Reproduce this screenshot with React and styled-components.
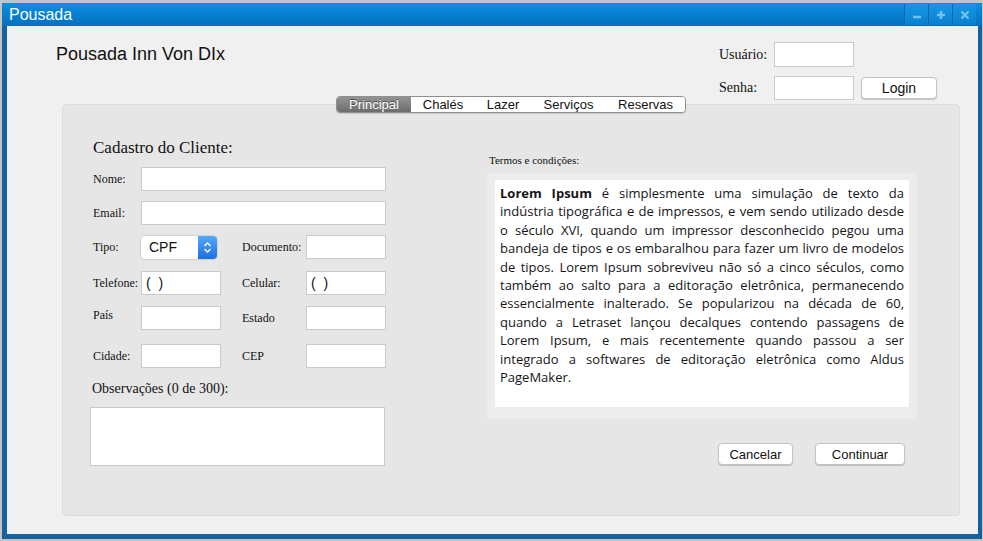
import React from 'react'
import styled, { createGlobalStyle } from 'styled-components'

const GlobalStyle = createGlobalStyle`
	html, body {
		margin: 0;
		padding: 0;
		background: #c4c4c4;
	}
	* {
		box-sizing: border-box;
	}
`

const Window = styled.div`
	margin: 3px 1px 2px 2px;
	height: 536px;
	display: flex;
	flex-direction: column;
	background: #15629f;
`

const TitleBar = styled.div`
	height: 23px;
	display: flex;
	align-items: center;
	justify-content: space-between;
	background: linear-gradient(#0b8fe3, #0570bd);
	padding: 0 6px 0 7px;
`

const Title = styled.span`
	font-family: "Liberation Sans", Arial, sans-serif;
	font-size: 16px;
	color: #fff;
	margin-top: 1px;
`

const WinButtons = styled.div`
	display: flex;
	align-self: stretch;
	padding: 1px 0 1px;
`

const WinButton = styled.div`
	width: 24px;
	display: flex;
	align-items: center;
	justify-content: center;
	background: linear-gradient(#1399ea, #0a7fcc);
	border-left: 1px solid #0767ab;
`

const Content = styled.div`
	flex: 1;
	margin: 0 4px 5px 5px;
	background: #f0f0f0;
	display: flex;
	flex-direction: column;
`

const Header = styled.div`
	height: 78px;
	display: flex;
	justify-content: space-between;
	align-items: flex-start;
	padding: 16px 41px 0 49px;
`

const Brand = styled.h1`
	margin: 2px 0 0;
	font-family: "Liberation Sans", Arial, sans-serif;
	font-weight: 400;
	font-size: 18px;
	line-height: 21px;
	color: #111;
`

const LoginGrid = styled.div`
	display: grid;
	grid-template-columns: 48px 80px 76px;
	grid-template-rows: 25px 24px;
	column-gap: 7px;
	row-gap: 9px;
	align-items: center;
`

const LoginLabel = styled.span`
	font-family: "Liberation Serif", "Times New Roman", serif;
	font-size: 14px;
	color: #111;
`

const Field = styled.div`
	width: ${p => p.$w || 80}px;
	height: ${p => p.$h || 24}px;
	background: #fff;
	border: 1px solid #cacaca;
	font-family: "Liberation Sans", Arial, sans-serif;
	font-size: 14px;
	color: #111;
	padding: 0 4px;
	display: flex;
	align-items: center;
	grid-column: ${p => p.$span || 'auto'};
	margin-left: ${p => p.$ml || 0}px;
`

const Button = styled.button`
	width: ${p => p.$w}px;
	height: 22px;
	background: #fff;
	border: 1px solid #c4c4c4;
	border-radius: 4px;
	box-shadow: 0 1px 1px rgba(0, 0, 0, 0.18);
	font-family: "Liberation Sans", Arial, sans-serif;
	font-size: ${p => p.$fs || 13}px;
	color: #111;
	padding: 0;
`

const Panel = styled.div`
	height: 412px;
	margin: 0 18px 0 55px;
	background: #e6e6e6;
	border: 1px solid #dcdcdc;
	border-radius: 4px;
	display: flex;
	flex-direction: column;
`

const TabsRow = styled.div`
	margin-top: -9px;
	display: flex;
	justify-content: center;
`

const Tabs = styled.div`
	display: flex;
	height: 17px;
	background: #fff;
	border: 1px solid #8f8f8f;
	border-radius: 4px;
	overflow: hidden;
	box-shadow: 0 1px 1px rgba(0, 0, 0, 0.12);
`

const Tab = styled.div`
	width: ${p => p.$w}px;
	display: flex;
	align-items: center;
	justify-content: center;
	font-family: "Liberation Sans", Arial, sans-serif;
	font-size: 13px;
	color: ${p => (p.$active ? '#fff' : '#111')};
	background: ${p => (p.$active ? 'linear-gradient(#939393, #6d6d6d)' : '#fff')};
	text-shadow: ${p => (p.$active ? '0 -1px 0 rgba(0,0,0,0.45)' : 'none')};
	position: relative;

	& + &::before {
		content: '';
		position: absolute;
		left: 0;
		top: 3px;
		bottom: 3px;
		border-left: 1px solid #d0d0d0;
	}
`

const Body = styled.div`
	display: flex;
	align-items: flex-start;
	padding: 24px 0 0 30px;
`

const FormCol = styled.div`
	width: 293px;
	display: flex;
	flex-direction: column;
`

const FormTitle = styled.h2`
	margin: 0 0 9px;
	font-family: "Liberation Serif", "Times New Roman", serif;
	font-weight: 400;
	font-size: 17px;
	line-height: 21px;
	color: #111;
`

const FormRow = styled.div`
	display: grid;
	grid-template-columns: 48px 80px 21px 64px 80px;
	height: 24px;
	align-items: center;
	margin-top: ${p => p.$mt || 0}px;
`

const Label = styled.span`
	font-family: "Liberation Serif", "Times New Roman", serif;
	font-size: 12px;
	color: #111;
	grid-column: ${p => p.$col || 'auto'};
	margin-top: ${p => p.$up ? -6 : 0}px;
`

const Select = styled.div`
	width: 76px;
	height: 23px;
	display: flex;
	border-radius: 4px;
	background: #fff;
	box-shadow: 0 0 0 1px #d2d2d2, 0 1px 1px rgba(0, 0, 0, 0.15);
	overflow: hidden;
	font-family: "Liberation Sans", Arial, sans-serif;
	font-size: 14px;
	color: #111;
`

const SelectValue = styled.span`
	flex: 1;
	display: flex;
	align-items: center;
	padding-left: 8px;
`

const Stepper = styled.span`
	width: 19px;
	display: flex;
	align-items: center;
	justify-content: center;
	background: linear-gradient(#55a8f7, #1b6fe3);
`

const NotesLabel = styled.div`
	margin: 13px 0 10px -1px;
	font-family: "Liberation Serif", "Times New Roman", serif;
	font-size: 14px;
	line-height: 16px;
	color: #111;
`

const TermsCol = styled.div`
	width: 430px;
	margin: 17px 0 0 101px;
	display: flex;
	flex-direction: column;
`

const TermsLabel = styled.div`
	margin: 0 0 6px 2px;
	font-family: "Liberation Serif", "Times New Roman", serif;
	font-size: 11px;
	line-height: 13px;
	color: #111;
`

const TermsBox = styled.div`
	height: 246px;
	background: #ececec;
	padding: 7px 8px 12px;
`

const TermsText = styled.p`
	margin: 0;
	height: 100%;
	background: #fff;
	padding: 4px 5px;
	font-family: "Open Sans", sans-serif;
	font-size: 13px;
	line-height: 18.4px;
	text-align: justify;
	color: #151515;

	b {
		font-weight: 700;
	}
`

const Actions = styled.div`
	display: flex;
	justify-content: flex-end;
	gap: 22px;
	margin-top: 24px;
	padding-right: 12px;
`

const Minus = () => (
	<svg width="10" height="10" viewBox="0 0 10 10">
		<path d="M1 7h8" stroke="#74c0ef" strokeWidth="2.6" />
	</svg>
)

const Plus = () => (
	<svg width="10" height="10" viewBox="0 0 10 10">
		<path d="M1 5h8M5 1v8" stroke="#74c0ef" strokeWidth="2.6" />
	</svg>
)

const Cross = () => (
	<svg width="10" height="10" viewBox="0 0 10 10">
		<path d="M1.5 1.5l7 7M8.5 1.5l-7 7" stroke="#74c0ef" strokeWidth="2.4" />
	</svg>
)

const Chevrons = () => (
	<svg width="9" height="13" viewBox="0 0 9 13">
		<path d="M1.5 5l3-3 3 3M1.5 8l3 3 3-3" fill="none" stroke="#fff" strokeWidth="1.4" />
	</svg>
)

const tabs = [
	{ name: 'Principal', w: 74, active: true },
	{ name: 'Chalés', w: 64 },
	{ name: 'Lazer', w: 56 },
	{ name: 'Serviços', w: 75 },
	{ name: 'Reservas', w: 79 },
]

export default function App() {
	return (
		<>
			<GlobalStyle />
			<Window>
				<TitleBar>
					<Title>Pousada</Title>
					<WinButtons>
						<WinButton><Minus /></WinButton>
						<WinButton><Plus /></WinButton>
						<WinButton><Cross /></WinButton>
					</WinButtons>
				</TitleBar>
				<Content>
					<Header>
						<Brand>Pousada Inn Von DIx</Brand>
						<LoginGrid>
							<LoginLabel>Usuário:</LoginLabel>
							<Field $h={25} />
							<span />
							<LoginLabel>Senha:</LoginLabel>
							<Field />
							<Button $w={76} $fs={14}>Login</Button>
						</LoginGrid>
					</Header>
					<Panel>
						<TabsRow>
							<Tabs>
								{tabs.map(t => (
									<Tab key={t.name} $w={t.w} $active={t.active}>{t.name}</Tab>
								))}
							</Tabs>
						</TabsRow>
						<Body>
							<FormCol>
								<FormTitle>Cadastro do Cliente:</FormTitle>
								<FormRow>
									<Label>Nome:</Label>
									<Field $w={245} $span="2 / 6" />
								</FormRow>
								<FormRow $mt={10}>
									<Label>Email:</Label>
									<Field $w={245} $span="2 / 6" />
								</FormRow>
								<FormRow $mt={10}>
									<Label>Tipo:</Label>
									<Select>
										<SelectValue>CPF</SelectValue>
										<Stepper><Chevrons /></Stepper>
									</Select>
									<Label $col="4">Documento:</Label>
									<Field />
								</FormRow>
								<FormRow $mt={12}>
									<Label>Telefone:</Label>
									<Field>(&nbsp;&nbsp;)</Field>
									<Label $col="4">Celular:</Label>
									<Field>(&nbsp;&nbsp;)</Field>
								</FormRow>
								<FormRow $mt={11}>
									<Label $up>País</Label>
									<Field />
									<Label $col="4">Estado</Label>
									<Field />
								</FormRow>
								<FormRow $mt={14}>
									<Label>Cidade:</Label>
									<Field />
									<Label $col="4">CEP</Label>
									<Field />
								</FormRow>
								<NotesLabel>Observações (0 de 300):</NotesLabel>
								<Field $w={295} $h={59} $ml={-3} />
							</FormCol>
							<TermsCol>
								<TermsLabel>Termos e condições:</TermsLabel>
								<TermsBox>
									<TermsText>
										<b>Lorem Ipsum</b> é simplesmente uma simulação de texto da indústria tipográfica e de impressos, e vem sendo utilizado desde o século XVI, quando um impressor desconhecido pegou uma bandeja de tipos e os embaralhou para fazer um livro de modelos de tipos. Lorem Ipsum sobreviveu não só a cinco séculos, como também ao salto para a editoração eletrônica, permanecendo essencialmente inalterado. Se popularizou na década de 60, quando a Letraset lançou decalques contendo passagens de Lorem Ipsum, e mais recentemente quando passou a ser integrado a softwares de editoração eletrônica como Aldus PageMaker.
									</TermsText>
								</TermsBox>
								<Actions>
									<Button $w={75}>Cancelar</Button>
									<Button $w={90}>Continuar</Button>
								</Actions>
							</TermsCol>
						</Body>
					</Panel>
				</Content>
			</Window>
		</>
	)
}
